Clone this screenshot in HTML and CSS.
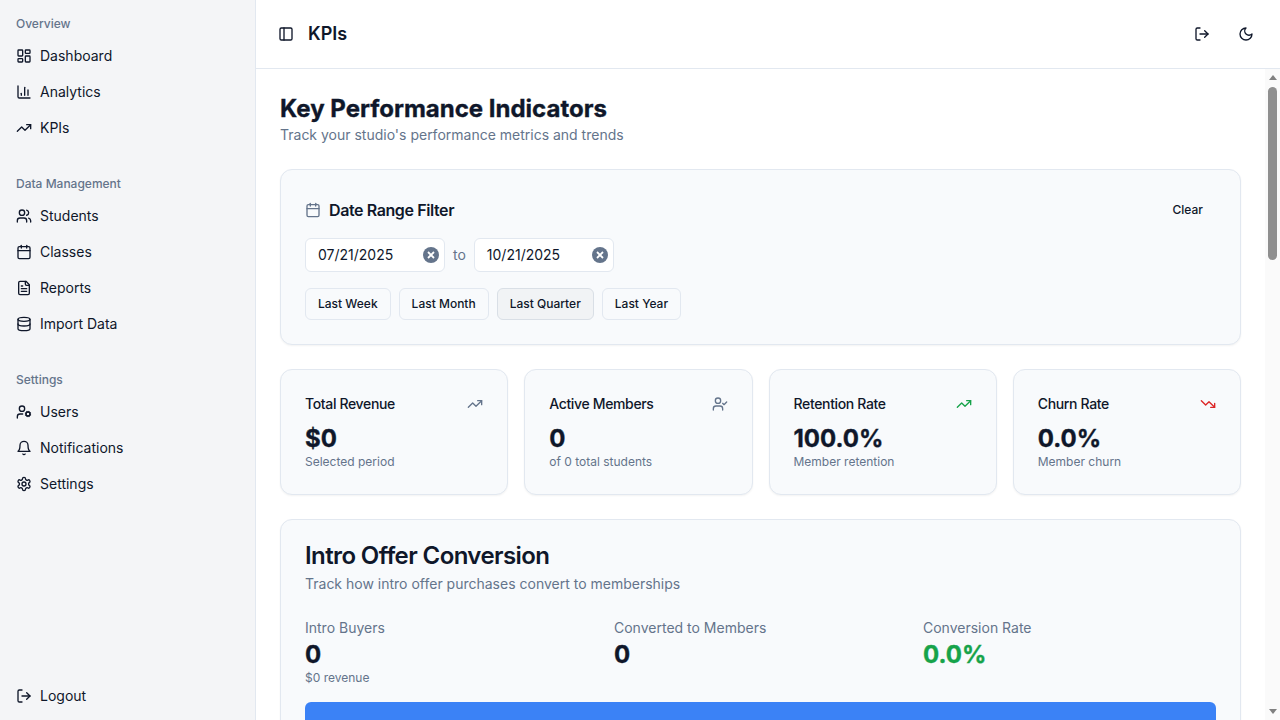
FILE: index.html
```html
<!doctype html>
<html lang="en">
<head>
<meta charset="UTF-8">
<meta name="viewport" content="width=device-width, initial-scale=1.0">
<title>KPIs</title>
<link rel="stylesheet" href="styles.css">
</head>
<body>
<!-- icon set -->
<svg class="icon-defs" aria-hidden="true">
<symbol id="i-dashboard" viewBox="0 0 24 24"><rect x="3" y="3" width="7" height="9" rx="1"/><rect x="14" y="3" width="7" height="5" rx="1"/><rect x="14" y="12" width="7" height="9" rx="1"/><rect x="3" y="16" width="7" height="5" rx="1"/></symbol>
<symbol id="i-chart" viewBox="0 0 24 24"><path d="M3 3v16a2 2 0 0 0 2 2h16"/><path d="M18 17V9"/><path d="M13 17V5"/><path d="M8 17v-3"/></symbol>
<symbol id="i-up" viewBox="0 0 24 24"><path d="M16 7h6v6"/><path d="m22 7-8.5 8.5-5-5L2 17"/></symbol>
<symbol id="i-down" viewBox="0 0 24 24"><path d="M16 17h6v-6"/><path d="m22 17-8.5-8.5-5 5L2 7"/></symbol>
<symbol id="i-users" viewBox="0 0 24 24"><path d="M16 21v-2a4 4 0 0 0-4-4H6a4 4 0 0 0-4 4v2"/><circle cx="9" cy="7" r="4"/><path d="M22 21v-2a4 4 0 0 0-3-3.87"/><path d="M16 3.13a4 4 0 0 1 0 7.75"/></symbol>
<symbol id="i-calendar" viewBox="0 0 24 24"><path d="M8 2v4"/><path d="M16 2v4"/><rect x="3" y="4" width="18" height="18" rx="2"/><path d="M3 10h18"/></symbol>
<symbol id="i-file" viewBox="0 0 24 24"><path d="M15 2H6a2 2 0 0 0-2 2v16a2 2 0 0 0 2 2h12a2 2 0 0 0 2-2V7Z"/><path d="M14 2v4a2 2 0 0 0 2 2h4"/><path d="M10 9H8"/><path d="M16 13H8"/><path d="M16 17H8"/></symbol>
<symbol id="i-database" viewBox="0 0 24 24"><ellipse cx="12" cy="5" rx="9" ry="3"/><path d="M3 5V19A9 3 0 0 0 21 19V5"/><path d="M3 12A9 3 0 0 0 21 12"/></symbol>
<symbol id="i-user-cog" viewBox="0 0 24 24"><circle cx="18" cy="15" r="3"/><circle cx="9" cy="7" r="4"/><path d="M10 15H6a4 4 0 0 0-4 4v2"/><path d="m21.7 16.4-.9-.3"/><path d="m15.2 13.9-.9-.3"/><path d="m16.6 18.7.3-.9"/><path d="m19.1 12.2.3-.9"/><path d="m19.6 18.7-.4-1"/><path d="m16.8 12.3-.4-1"/><path d="m14.3 16.6 1-.4"/><path d="m20.7 13.8 1-.4"/></symbol>
<symbol id="i-user-check" viewBox="0 0 24 24"><path d="M16 21v-2a4 4 0 0 0-4-4H6a4 4 0 0 0-4 4v2"/><circle cx="9" cy="7" r="4"/><path d="m16 11 2 2 4-4"/></symbol>
<symbol id="i-bell" viewBox="0 0 24 24"><path d="M6 8a6 6 0 0 1 12 0c0 7 3 9 3 9H3s3-2 3-9"/><path d="M10.3 21a1.94 1.94 0 0 0 3.4 0"/></symbol>
<symbol id="i-gear" viewBox="0 0 24 24"><path d="M12.22 2h-.44a2 2 0 0 0-2 2v.18a2 2 0 0 1-1 1.73l-.43.25a2 2 0 0 1-2 0l-.15-.08a2 2 0 0 0-2.73.73l-.22.38a2 2 0 0 0 .73 2.73l.15.1a2 2 0 0 1 1 1.72v.51a2 2 0 0 1-1 1.74l-.15.09a2 2 0 0 0-.73 2.73l.22.38a2 2 0 0 0 2.73.73l.15-.08a2 2 0 0 1 2 0l.43.25a2 2 0 0 1 1 1.73V20a2 2 0 0 0 2 2h.44a2 2 0 0 0 2-2v-.18a2 2 0 0 1 1-1.73l.43-.25a2 2 0 0 1 2 0l.15.08a2 2 0 0 0 2.73-.73l.22-.39a2 2 0 0 0-.73-2.73l-.15-.08a2 2 0 0 1-1-1.74v-.5a2 2 0 0 1 1-1.74l.15-.09a2 2 0 0 0 .73-2.73l-.22-.38a2 2 0 0 0-2.73-.73l-.15.08a2 2 0 0 1-2 0l-.43-.25a2 2 0 0 1-1-1.73V4a2 2 0 0 0-2-2z"/><circle cx="12" cy="12" r="3"/></symbol>
<symbol id="i-logout" viewBox="0 0 24 24"><path d="M9 21H5a2 2 0 0 1-2-2V5a2 2 0 0 1 2-2h4"/><path d="m16 17 5-5-5-5"/><path d="M21 12H9"/></symbol>
<symbol id="i-moon" viewBox="0 0 24 24"><path d="M12 3a6 6 0 0 0 9 9 9 9 0 1 1-9-9Z"/></symbol>
<symbol id="i-panel" viewBox="0 0 24 24"><rect x="3" y="3" width="18" height="18" rx="2"/><path d="M9 3v18"/></symbol>
</svg>

<div class="app">
<aside class="sidebar">
<div class="nav-group">
<div class="nav-label">Overview</div>
<a class="nav-item"><svg class="icon"><use href="#i-dashboard"/></svg>Dashboard</a>
<a class="nav-item"><svg class="icon"><use href="#i-chart"/></svg>Analytics</a>
<a class="nav-item"><svg class="icon"><use href="#i-up"/></svg>KPIs</a>
</div>
<div class="nav-group">
<div class="nav-label">Data Management</div>
<a class="nav-item"><svg class="icon"><use href="#i-users"/></svg>Students</a>
<a class="nav-item"><svg class="icon"><use href="#i-calendar"/></svg>Classes</a>
<a class="nav-item"><svg class="icon"><use href="#i-file"/></svg>Reports</a>
<a class="nav-item"><svg class="icon"><use href="#i-database"/></svg>Import Data</a>
</div>
<div class="nav-group">
<div class="nav-label">Settings</div>
<a class="nav-item"><svg class="icon"><use href="#i-user-cog"/></svg>Users</a>
<a class="nav-item"><svg class="icon"><use href="#i-bell"/></svg>Notifications</a>
<a class="nav-item"><svg class="icon"><use href="#i-gear"/></svg>Settings</a>
</div>
<div class="nav-footer">
<a class="nav-item"><svg class="icon"><use href="#i-logout"/></svg>Logout</a>
</div>
</aside>

<div class="content">
<header class="topbar">
<button class="icon-btn small"><svg class="icon"><use href="#i-panel"/></svg></button>
<div class="topbar-title">KPIs</div>
<div class="topbar-actions">
<button class="icon-btn"><svg class="icon"><use href="#i-logout"/></svg></button>
<button class="icon-btn"><svg class="icon"><use href="#i-moon"/></svg></button>
</div>
</header>

<div class="body-row">
<main class="main">
<h1>Key Performance Indicators</h1>
<p class="page-sub">Track your studio's performance metrics and trends</p>

<section class="card filter-card">
<div class="filter-head">
<svg class="icon muted"><use href="#i-calendar"/></svg>
<div class="filter-title">Date Range Filter</div>
<button class="clear-btn">Clear</button>
</div>
<div class="date-row">
<div class="date-input">07/21/2025<span class="date-clear"><svg viewBox="0 0 16 16"><path d="M5 5l6 6M11 5l-6 6"/></svg></span></div>
<span class="date-to">to</span>
<div class="date-input">10/21/2025<span class="date-clear"><svg viewBox="0 0 16 16"><path d="M5 5l6 6M11 5l-6 6"/></svg></span></div>
</div>
<div class="preset-row">
<button class="preset">Last Week</button>
<button class="preset">Last Month</button>
<button class="preset active">Last Quarter</button>
<button class="preset">Last Year</button>
</div>
</section>

<section class="kpi-grid">
<div class="card kpi">
<div class="kpi-head"><span>Total Revenue</span><svg class="icon muted"><use href="#i-up"/></svg></div>
<div class="kpi-value">$0</div>
<div class="kpi-note">Selected period</div>
</div>
<div class="card kpi">
<div class="kpi-head"><span>Active Members</span><svg class="icon muted"><use href="#i-user-check"/></svg></div>
<div class="kpi-value">0</div>
<div class="kpi-note">of 0 total students</div>
</div>
<div class="card kpi">
<div class="kpi-head"><span>Retention Rate</span><svg class="icon green"><use href="#i-up"/></svg></div>
<div class="kpi-value">100.0%</div>
<div class="kpi-note">Member retention</div>
</div>
<div class="card kpi">
<div class="kpi-head"><span>Churn Rate</span><svg class="icon red"><use href="#i-down"/></svg></div>
<div class="kpi-value">0.0%</div>
<div class="kpi-note">Member churn</div>
</div>
</section>

<section class="card intro-card">
<h2>Intro Offer Conversion</h2>
<p class="intro-sub">Track how intro offer purchases convert to memberships</p>
<div class="intro-grid">
<div>
<div class="intro-label">Intro Buyers</div>
<div class="kpi-value tight">0</div>
<div class="kpi-note">$0 revenue</div>
</div>
<div>
<div class="intro-label">Converted to Members</div>
<div class="kpi-value tight">0</div>
</div>
<div>
<div class="intro-label">Conversion Rate</div>
<div class="kpi-value tight green">0.0%</div>
</div>
</div>
<div class="intro-bar"></div>
</section>
</main>
<div class="scrollbar">
<div class="scroll-arrow"><span class="tri-up"></span></div>
<div class="scroll-track"><div class="scroll-thumb"></div></div>
<div class="scroll-arrow"><span class="tri-down"></span></div>
</div>
</div>
</div>
</div>
</body>
</html>
```

FILE: styles.css
```css
* {
box-sizing: border-box;
}
html, body {
height: 100%;
}
body {
margin: 0;
font-family: Inter, "Liberation Sans", sans-serif;
font-size: 14px;
line-height: 20px;
color: #0f172a;
background: #fff;
overflow: hidden;
}
h1, h2, p {
margin: 0;
}
button {
font-family: inherit;
color: inherit;
cursor: pointer;
}
.icon-defs {
position: absolute;
width: 0;
height: 0;
}
.icon {
width: 16px;
height: 16px;
flex-shrink: 0;
fill: none;
stroke: currentColor;
stroke-width: 2;
stroke-linecap: round;
stroke-linejoin: round;
}
.muted {
color: #64748b;
}
.green {
color: #16a34a;
}
.red {
color: #dc2626;
}
.app {
display: flex;
height: 720px;
}

/* sidebar */
.sidebar {
width: 256px;
flex-shrink: 0;
display: flex;
flex-direction: column;
padding: 10px 0 6px;
background: #f4f5f7;
border-right: 1px solid #e2e8f0;
}
.nav-group {
margin-bottom: 24px;
}
.nav-label {
height: 28px;
padding-left: 16px;
font-size: 12px;
font-weight: 500;
line-height: 28px;
color: #64748b;
}
.nav-item {
display: flex;
align-items: center;
gap: 8px;
height: 36px;
padding-left: 16px;
color: #0f172a;
}
.nav-footer {
margin-top: auto;
}

/* top bar */
.content {
flex: 1;
min-width: 0;
display: flex;
flex-direction: column;
}
.topbar {
height: 69px;
flex-shrink: 0;
display: flex;
align-items: center;
padding: 0 16px;
border-bottom: 1px solid #e2e8f0;
}
.topbar-title {
margin-left: 8px;
font-size: 18px;
font-weight: 600;
line-height: 28px;
}
.topbar-actions {
margin-left: auto;
display: flex;
gap: 8px;
}
.icon-btn {
width: 36px;
height: 36px;
padding: 0;
display: flex;
align-items: center;
justify-content: center;
background: none;
border: none;
border-radius: 6px;
}
.icon-btn.small {
width: 28px;
height: 28px;
}

/* page */
.body-row {
flex: 1;
min-height: 0;
display: flex;
}
.main {
flex: 1;
min-width: 0;
padding: 24px;
overflow: hidden;
}

/* the classic scrollbar does not show headless, so it is drawn */
.scrollbar {
width: 15px;
flex-shrink: 0;
display: flex;
flex-direction: column;
background: #fafafa;
}
.scroll-arrow {
height: 17px;
flex-shrink: 0;
display: flex;
align-items: center;
justify-content: center;
}
.tri-up, .tri-down {
width: 0;
height: 0;
border-left: 4.5px solid transparent;
border-right: 4.5px solid transparent;
}
.tri-up {
border-bottom: 5px solid #808080;
}
.tri-down {
border-top: 5px solid #808080;
}
.scroll-track {
flex: 1;
padding: 1px 3px 0;
}
.scroll-thumb {
height: 173px;
background: #8f8f8f;
border-radius: 5px;
}

h1 {
font-size: 24px;
font-weight: 700;
line-height: 32px;
-webkit-text-stroke: 0.35px currentColor;
}
.page-sub {
color: #64748b;
}
.card {
background: #f8fafc;
border: 1px solid #e2e8f0;
border-radius: 12px;
box-shadow: 0 1px 2px rgba(0, 0, 0, 0.05);
padding: 24px;
}

/* date filter */
.filter-card {
margin-top: 24px;
}
.filter-head {
display: flex;
align-items: center;
gap: 8px;
height: 32px;
}
.filter-title {
font-size: 16px;
font-weight: 600;
letter-spacing: -0.4px;
}
.clear-btn {
margin-left: auto;
height: 32px;
padding: 0 13px;
font-size: 12px;
font-weight: 500;
line-height: 16px;
background: none;
border: none;
border-radius: 6px;
}
.date-row {
display: flex;
align-items: center;
gap: 8px;
margin-top: 12px;
}
.date-input {
width: 140px;
height: 34px;
display: flex;
align-items: center;
justify-content: space-between;
padding: 0 5px 0 12px;
background: #fff;
border: 1px solid #e2e8f0;
border-radius: 6px;
}
.date-clear {
width: 16px;
height: 16px;
border-radius: 50%;
background: #64748b;
display: flex;
}
.date-clear svg {
width: 16px;
height: 16px;
fill: none;
stroke: #fff;
stroke-width: 1.8;
}
.date-to {
color: #64748b;
}
.preset-row {
display: flex;
gap: 8px;
margin-top: 16px;
}
.preset {
height: 32px;
padding: 0 12px;
font-size: 12px;
font-weight: 500;
line-height: 16px;
background: #f8fafc;
border: 1px solid #e2e8f0;
border-radius: 6px;
}
.preset.active {
background: #f1f3f5;
border-color: #d9dfe6;
}

/* kpi cards */
.kpi-grid {
display: grid;
grid-template-columns: repeat(4, 1fr);
gap: 16px;
margin-top: 24px;
}
.kpi-head {
display: flex;
align-items: center;
justify-content: space-between;
height: 20px;
font-weight: 500;
letter-spacing: -0.35px;
}
.kpi-value {
height: 32px;
margin-top: 8px;
font-size: 24px;
font-weight: 700;
line-height: 34px;
-webkit-text-stroke: 0.35px currentColor;
}
.kpi-value.tight {
margin-top: 0;
}
.kpi-note {
font-size: 12px;
line-height: 16px;
color: #64748b;
}

/* intro offer */
.intro-card {
margin-top: 24px;
}
h2 {
font-size: 24px;
font-weight: 600;
line-height: 24px;
letter-spacing: -0.6px;
}
.intro-sub {
margin-top: 6px;
color: #64748b;
}
.intro-grid {
display: grid;
grid-template-columns: repeat(3, 1fr);
gap: 16px;
margin-top: 24px;
}
.intro-label {
color: #64748b;
}
.intro-bar {
height: 40px;
margin-top: 16px;
background: #3b82f6;
border-radius: 6px;
}
```
